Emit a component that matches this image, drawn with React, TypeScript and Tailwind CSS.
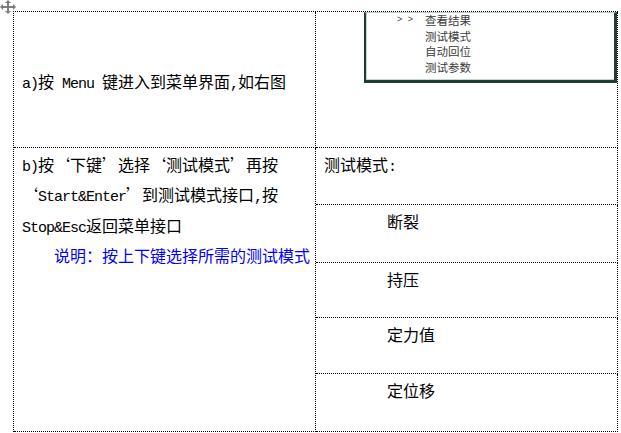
import type { ReactNode } from "react";

const cjk = { fontFamily: '"Noto Sans CJK SC", sans-serif' };
const mono = { fontFamily: '"Liberation Mono", "DejaVu Sans Mono", monospace' };

// half-width latin run, 8px per char like the document font
const L = ({ children }: { children: ReactNode }) => (
  <span className="text-[15px] tracking-[-1px]" style={mono}>
    {children}
  </span>
);

const menuItems = ["查看结果", "测试模式", "自动回位", "测试参数"];
const modes = [
  { name: "断裂", h: "h-[58px]" },
  { name: "持压", h: "h-[55px]" },
  { name: "定力值", h: "h-[56px]" },
  { name: "定位移", h: "h-[58px]" },
];

const MoveHandle = () => (
  <svg className="absolute left-0 top-0" width="16" height="14" viewBox="0 0 16 14">
    <g fill="#7d7d7d">
      <polygon points="8,0 11,3 5,3" />
      <polygon points="8,14 11,11 5,11" />
      <polygon points="0,7 3,4 3,10" />
      <polygon points="16,7 13,4 13,10" />
      <rect x="7" y="2" width="2" height="10" />
      <rect x="2" y="6" width="12" height="2" />
    </g>
  </svg>
);

export default function App() {
  return (
    <div className="relative min-h-[433px] w-[621px] bg-white pl-[13px] pt-[11px] text-[16px] text-black" style={cjk}>
      <MoveHandle />
      <div className="grid w-[605px] grid-cols-[302px_302px] border-l border-t border-dotted border-black">
        {/* row a */}
        <div className="flex h-[136px] items-center border-b border-r border-dotted border-black pl-[8px] pt-[6px]">
          <span className="whitespace-nowrap leading-[20px]">
            <L>a)</L>按<L> Menu </L>键进入到菜单界面<L>,</L>如右图
          </span>
        </div>
        <div className="flex h-[136px] items-start justify-end border-b border-r border-dotted border-black">
          <div className="h-[71px] w-[253px] border-b-[3px] border-l-2 border-r-[3px] border-t border-[#1f3b35] border-t-[#b9ccc7] bg-white text-[11.5px] leading-[15.7px] text-[#3a3a3a]">
            <div className="h-full border-b border-l border-[#c9d3d0] pl-[30px]">
              {menuItems.map((item, i) => (
                <div key={item} className="flex">
                  <span className="w-[28px] text-[9px]" style={mono}>
                    {i === 0 ? "> >" : ""}
                  </span>
                  <span>{item}</span>
                </div>
              ))}
            </div>
          </div>
        </div>

        {/* row b */}
        <div className="row-span-5 border-b border-r border-dotted border-black pl-[8px] pt-[3px] leading-[27.33px]">
          <div className="whitespace-nowrap">
            <L>b)</L>按‘下键’选择‘测试模式’再按
          </div>
          <div className="whitespace-nowrap">
            ‘<L>Start&amp;Enter</L>’到测试模式接口<L>,</L>按
          </div>
          <div className="whitespace-nowrap">
            <L>Stop&amp;Esc</L>返回菜单接口
          </div>
          <div className="whitespace-nowrap pl-8 text-[#0000ff]">说明：按上下键选择所需的测试模式</div>
        </div>
        <div className="h-[57px] border-b border-r border-dotted border-black pl-[8px] pt-[3px] leading-[27.33px]">
          测试模式<L>:</L>
        </div>
        {modes.map((m) => (
          <div
            key={m.name}
            className={`${m.h} border-b border-r border-dotted border-black pl-[71px] pt-[3px] leading-[27.33px]`}
          >
            {m.name}
          </div>
        ))}
      </div>
    </div>
  );
}
